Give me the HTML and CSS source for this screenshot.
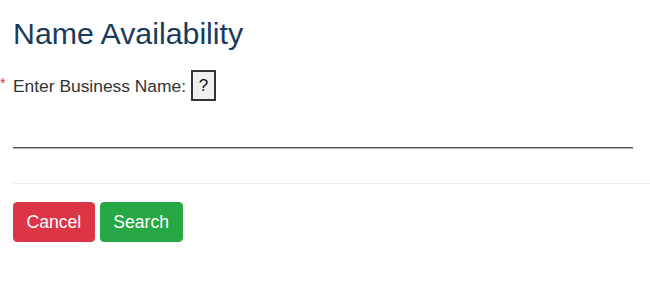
FILE: index.html
```html
<!DOCTYPE html>
<html lang="en">
<head>
<meta charset="utf-8">
<title>Name Availability</title>
<link rel="stylesheet" href="styles.css">
</head>
<body>
<main class="page">
  <h1 class="title">Name Availability</h1>
  <form class="form">
    <div class="field-row">
      <span class="required">*</span>
      <label class="label" for="bizname">Enter Business Name:</label>
      <button type="button" class="help">?</button>
    </div>
    <input id="bizname" class="name-input" type="text">
    <hr class="divider">
    <div class="actions">
      <button type="button" class="btn btn-cancel">Cancel</button>
      <button type="submit" class="btn btn-search">Search</button>
    </div>
  </form>
</main>
</body>
</html>
```

FILE: styles.css
```css
html, body {
  margin: 0;
  padding: 0;
  background: #fff;
}

body {
  font-family: "Liberation Sans", Arial, sans-serif;
  color: #333;
  overflow: hidden;
}

.page {
  padding: 17px 0 0 13px;
}

.title {
  margin: 0;
  font-size: 30.3px;
  line-height: 34px;
  font-weight: normal;
  color: #1a3a5a;
}

.form {
  margin-top: 19px;
}

.field-row {
  display: flex;
  align-items: center;
  margin-left: -13px;
  height: 31px;
}

.required {
  width: 13px;
  align-self: flex-start;
  color: #e0303c;
  font-size: 14px;
  line-height: 14px;
  padding-top: 6px;
  box-sizing: border-box;
}

.label {
  font-size: 17.4px;
  line-height: 24px;
  color: #333;
  margin-right: 5px;
}

.help {
  box-sizing: border-box;
  width: 25px;
  height: 31px;
  padding: 0;
  border: 2px solid #333;
  border-radius: 0;
  background: #efefef;
  font-family: "Liberation Sans", Arial, sans-serif;
  font-size: 17px;
  color: #111;
}

.name-input {
  display: block;
  box-sizing: border-box;
  width: 620px;
  height: 38px;
  margin-top: 9px;
  padding: 0;
  border: none;
  border-bottom: 1px solid #555;
  box-shadow: 0 1px 0 #b5b5b5;
  outline: none;
  font-size: 16px;
  background: transparent;
}

.divider {
  margin: 35px 0 0 0;
  border: 0;
  border-top: 1px solid #ececec;
  height: 0;
}

.actions {
  display: flex;
  gap: 5px;
  margin-top: 18px;
}

.btn {
  box-sizing: border-box;
  height: 40px;
  padding: 0 12.5px;
  border: 1px solid transparent;
  border-radius: 4px;
  font-family: "Liberation Sans", Arial, sans-serif;
  font-size: 17.6px;
  line-height: 1.5;
  color: #fff;
}

.btn-cancel {
  background: #dc3545;
  border-color: #dc3545;
}

.btn-search {
  background: #28a745;
  border-color: #28a745;
}
```
